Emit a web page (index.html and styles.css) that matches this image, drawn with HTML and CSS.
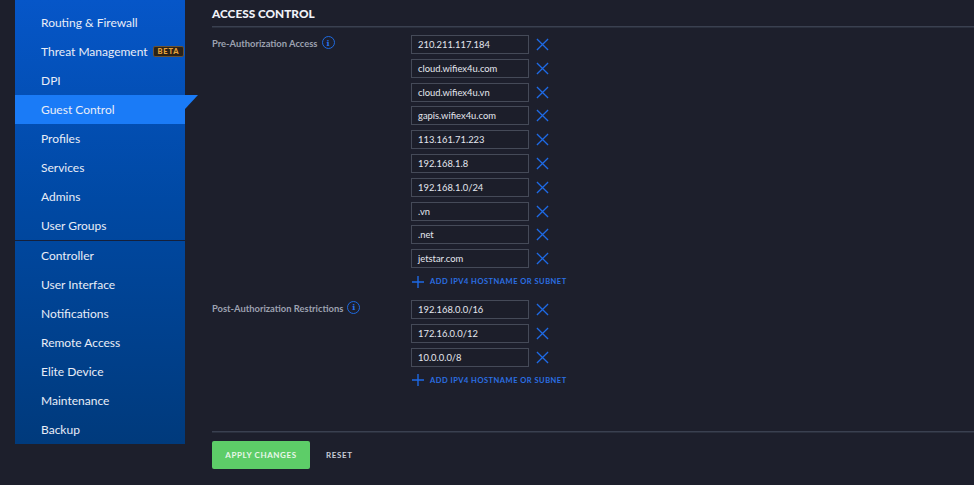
FILE: index.html
```html
<!DOCTYPE html>
<html>
<head>
<meta charset="utf-8">
<link rel="stylesheet" href="styles.css">
</head>
<body>
<div class="page">
  <nav class="sidebar">
    <div class="group">
      <div class="item">Routing &amp; Firewall</div>
      <div class="item">Threat Management <span class="beta">BETA</span></div>
      <div class="item">DPI</div>
      <div class="item active">Guest Control<span class="flag"></span></div>
      <div class="item">Profiles</div>
      <div class="item">Services</div>
      <div class="item">Admins</div>
      <div class="item">User Groups</div>
    </div>
    <div class="sep"></div>
    <div class="group">
      <div class="item">Controller</div>
      <div class="item">User Interface</div>
      <div class="item">Notifications</div>
      <div class="item">Remote Access</div>
      <div class="item">Elite Device</div>
      <div class="item">Maintenance</div>
      <div class="item">Backup</div>
    </div>
  </nav>
  <main class="main">
    <h2 class="title">ACCESS CONTROL</h2>
    <div class="rule"></div>
    <section class="row first">
      <div class="label">Pre-Authorization Access <span class="info">i</span></div>
      <div class="list">
        <div class="entry"><div class="field">210.211.117.184</div><svg class="x" viewBox="0 0 14 14"><path d="M1 1L13 13M13 1L1 13"/></svg></div>
        <div class="entry"><div class="field">cloud.wifiex4u.com</div><svg class="x" viewBox="0 0 14 14"><path d="M1 1L13 13M13 1L1 13"/></svg></div>
        <div class="entry"><div class="field">cloud.wifiex4u.vn</div><svg class="x" viewBox="0 0 14 14"><path d="M1 1L13 13M13 1L1 13"/></svg></div>
        <div class="entry"><div class="field">gapis.wifiex4u.com</div><svg class="x" viewBox="0 0 14 14"><path d="M1 1L13 13M13 1L1 13"/></svg></div>
        <div class="entry"><div class="field">113.161.71.223</div><svg class="x" viewBox="0 0 14 14"><path d="M1 1L13 13M13 1L1 13"/></svg></div>
        <div class="entry"><div class="field">192.168.1.8</div><svg class="x" viewBox="0 0 14 14"><path d="M1 1L13 13M13 1L1 13"/></svg></div>
        <div class="entry"><div class="field">192.168.1.0/24</div><svg class="x" viewBox="0 0 14 14"><path d="M1 1L13 13M13 1L1 13"/></svg></div>
        <div class="entry"><div class="field">.vn</div><svg class="x" viewBox="0 0 14 14"><path d="M1 1L13 13M13 1L1 13"/></svg></div>
        <div class="entry"><div class="field">.net</div><svg class="x" viewBox="0 0 14 14"><path d="M1 1L13 13M13 1L1 13"/></svg></div>
        <div class="entry"><div class="field">jetstar.com</div><svg class="x" viewBox="0 0 14 14"><path d="M1 1L13 13M13 1L1 13"/></svg></div>
        <div class="add"><svg class="plus" viewBox="0 0 14 14"><path d="M7 0V14M0 7H14"/></svg><span>ADD IPV4 HOSTNAME OR SUBNET</span></div>
      </div>
    </section>
    <section class="row second">
      <div class="label">Post-Authorization Restrictions <span class="info">i</span></div>
      <div class="list">
        <div class="entry"><div class="field">192.168.0.0/16</div><svg class="x" viewBox="0 0 14 14"><path d="M1 1L13 13M13 1L1 13"/></svg></div>
        <div class="entry"><div class="field">172.16.0.0/12</div><svg class="x" viewBox="0 0 14 14"><path d="M1 1L13 13M13 1L1 13"/></svg></div>
        <div class="entry"><div class="field">10.0.0.0/8</div><svg class="x" viewBox="0 0 14 14"><path d="M1 1L13 13M13 1L1 13"/></svg></div>
        <div class="add"><svg class="plus" viewBox="0 0 14 14"><path d="M7 0V14M0 7H14"/></svg><span>ADD IPV4 HOSTNAME OR SUBNET</span></div>
      </div>
    </section>
    <div class="spacer"></div>
    <div class="rule bottom"></div>
    <div class="actions">
      <button class="apply">APPLY CHANGES</button>
      <button class="reset">RESET</button>
    </div>
  </main>
</div>
</body>
</html>
```

FILE: styles.css
```css
html, body {
  margin: 0;
  padding: 0;
  background: #1d1f2c;
  height: 100%;
  overflow: hidden;
}
body {
  font-family: Lato, "Open Sans", sans-serif;
  color: #e6e9f2;
}
.page {
  display: flex;
  height: 485px;
}
.sidebar {
  margin-left: 15px;
  width: 170px;
  height: 444px;
  padding-top: 8px;
  box-sizing: border-box;
  background: linear-gradient(180deg, #0656c8 0%, #0049a4 45%, #003a7c 100%);
  display: flex;
  flex-direction: column;
}
.item {
  position: relative;
  height: 29px;
  line-height: 29px;
  padding-left: 26px;
  font-size: 12px;
  color: #e9edf7;
  display: flex;
  align-items: center;
  white-space: nowrap;
}
.item.active {
  background: #1a7bf7;
}
.flag {
  position: absolute;
  left: 100%;
  top: 0;
  width: 0;
  height: 0;
  border-top: 14px solid #1a7bf7;
  border-right: 13px solid transparent;
}
.beta {
  display: inline-block;
  margin-left: 5px;
  font-size: 7.5px;
  font-weight: 900;
  letter-spacing: 0.8px;
  color: #e7a33a;
  background: #2a2218;
  border: 1px solid #6a5234;
  border-radius: 2px;
  line-height: 9px;
  padding: 0 4px;
}
.sep {
  height: 1px;
  background: #15203a;
}
.main {
  flex: 1;
  margin-left: 27px;
  display: flex;
  flex-direction: column;
}
.title {
  margin: 0;
  padding-top: 7px;
  font-size: 11.8px;
  font-weight: 900;
  line-height: 14px;
  letter-spacing: 0;
  color: #f0f2f8;
}
.rule {
  margin-top: 5px;
  height: 1px;
  background: #3a4050;
  border-bottom: 1px solid #2a2f3d;
}
.row {
  display: flex;
}
.row.first {
  margin-top: 7px;
}
.row.second {
  margin-top: 12px;
}
.label {
  width: 199px;
  flex: none;
  font-size: 9.4px;
  font-weight: 700;
  color: #9ca1b0;
  padding-top: 3px;
  display: flex;
  align-items: flex-start;
  white-space: nowrap;
}
.info {
  display: inline-flex;
  align-items: center;
  justify-content: center;
  width: 11px;
  height: 11px;
  border: 1.5px solid #1e6ae0;
  border-radius: 50%;
  color: #2a74ec;
  font-size: 8px;
  font-weight: 700;
  margin-left: 4px;
  margin-top: -2px;
  box-sizing: content-box;
  font-family: "DejaVu Serif", serif;
}
.list {
  display: flex;
  flex-direction: column;
  gap: 4.8px;
}
.entry {
  display: flex;
  align-items: center;
}
.field {
  width: 118px;
  height: 19px;
  box-sizing: border-box;
  border: 1px solid #454a58;
  background: #1c1e2a;
  font-size: 9.4px;
  line-height: 17px;
  padding-left: 6px;
  color: #e4e7ef;
}
.x {
  width: 13px;
  height: 13px;
  margin-left: 7px;
  fill: none;
  stroke: #1e6ae6;
  stroke-width: 1.4;
}
.add {
  margin-top: 3px;
  display: flex;
  align-items: center;
  height: 12px;
  color: #2b6fe4;
  font-size: 7.5px;
  font-weight: 700;
  letter-spacing: 0.5px;
}
.plus {
  width: 12px;
  height: 12px;
  margin-left: 1px;
  margin-right: 6px;
  fill: none;
  stroke: #1e6ae6;
  stroke-width: 1.6;
}
.spacer {
  flex: none;
  height: 45px;
}
.rule.bottom {
  margin-top: 0;
}
.actions {
  display: flex;
  align-items: center;
  margin-top: 8px;
}
button {
  font-family: Lato, "Open Sans", sans-serif;
  border: 0;
  cursor: pointer;
}
.apply {
  width: 98px;
  height: 28px;
  background: #5dcd68;
  color: #e9f7ea;
  border-radius: 2px;
  font-size: 8px;
  font-weight: 700;
  letter-spacing: 0.6px;
}
.reset {
  margin-left: 10px;
  background: transparent;
  color: #c9cdd8;
  font-size: 8px;
  font-weight: 700;
  letter-spacing: 0.6px;
}
```
